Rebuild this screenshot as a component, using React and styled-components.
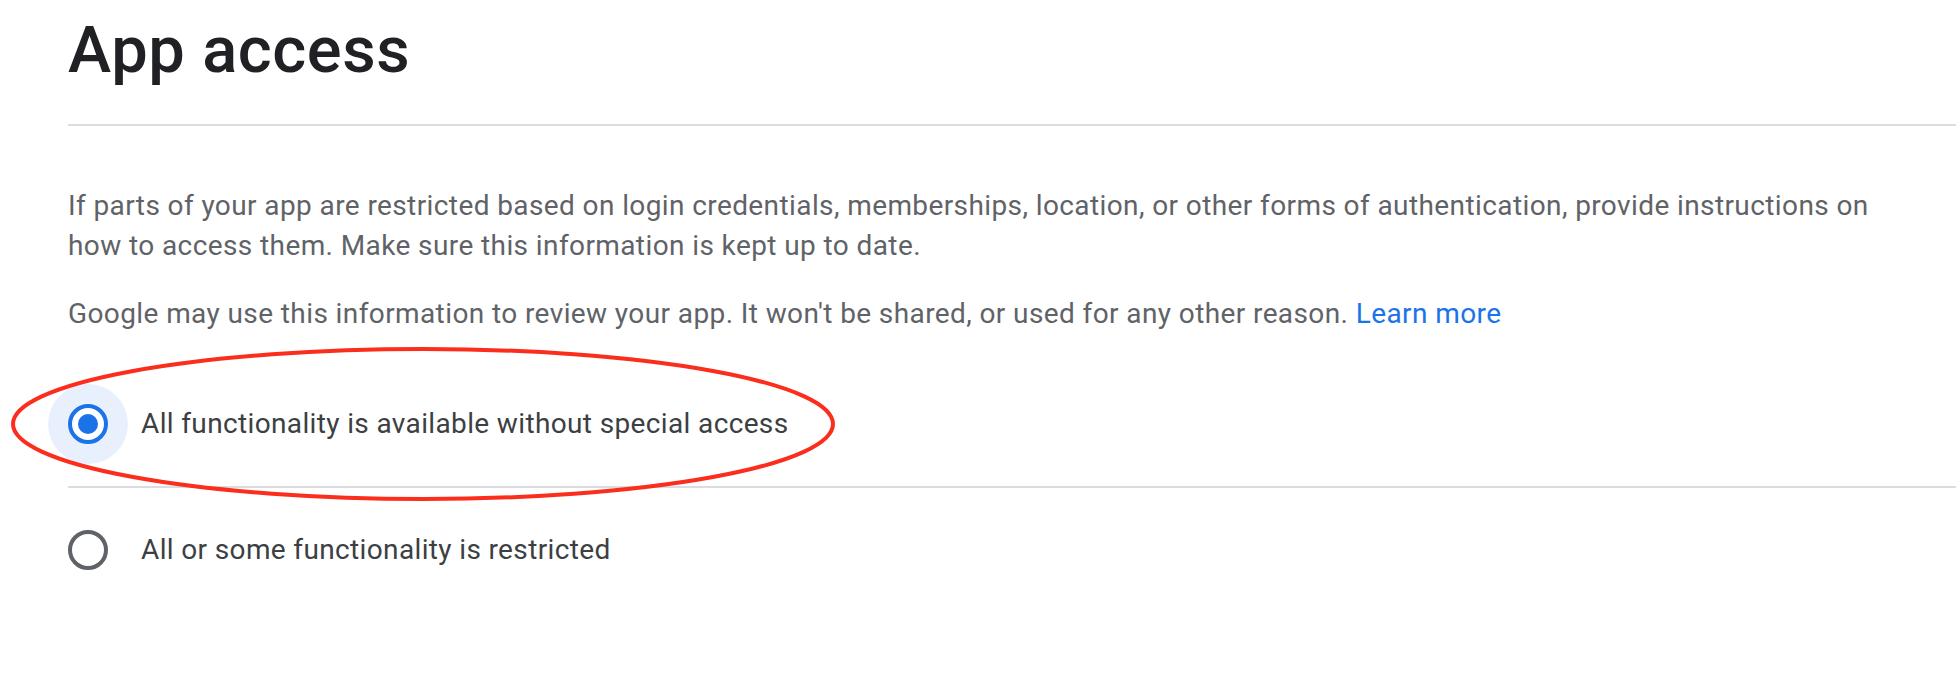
import React, { useState } from "react";
import styled, { createGlobalStyle } from "styled-components";

const GlobalStyle = createGlobalStyle`
  html, body {
    margin: 0;
    padding: 0;
    background: #ffffff;
  }
  body {
    font-family: Roboto, "Liberation Sans", Arial, sans-serif;
    -webkit-font-smoothing: antialiased;
  }
`;

const Page = styled.main`
  padding: 11px 0 0 68px;
`;

const Title = styled.h1`
  margin: 0;
  font-size: 65px;
  line-height: 79px;
  font-weight: 500;
  color: #202124;
  letter-spacing: 0.6px;
`;

const Divider = styled.hr`
  margin: ${({ $top }) => $top || 0}px 0 0;
  border: 0;
  height: 2px;
  background: #dadce0;
`;

const Section = styled.section`
  padding-top: 60px;
`;

const Paragraph = styled.p`
  margin: 0 0 28px;
  max-width: 1850px;
  font-size: 28px;
  line-height: 40px;
  color: #5f6368;
  letter-spacing: 0.4px;
`;

const Link = styled.a`
  color: #1a73e8;
  text-decoration: none;
  cursor: pointer;
`;

const Options = styled.div`
  margin-top: 50px;
`;

const OptionRow = styled.label`
  position: relative;
  display: flex;
  align-items: center;
  height: 80px;
  margin: ${({ $first }) => ($first ? "0 0 22px" : "22px 0 0")};
  cursor: pointer;
`;

const Radio = styled.span`
  flex: none;
  width: 40px;
  height: 40px;
  box-sizing: border-box;
  border-radius: 50%;
  border: 4px solid ${({ $checked }) => ($checked ? "#1a73e8" : "#5f6368")};
  box-shadow: ${({ $checked }) => ($checked ? "0 0 0 20px #e8f0fe" : "none")};
  display: flex;
  align-items: center;
  justify-content: center;

  &::after {
    content: "";
    width: 20px;
    height: 20px;
    border-radius: 50%;
    background: #1a73e8;
    transform: scale(${({ $checked }) => ($checked ? 1 : 0)});
  }
`;

const HiddenInput = styled.input`
  position: absolute;
  opacity: 0;
  width: 0;
  height: 0;
`;

const OptionText = styled.span`
  margin-left: 33px;
  font-size: 28px;
  line-height: 40px;
  color: #3c4043;
  letter-spacing: 0.36px;
`;

const Highlight = styled.svg`
  position: absolute;
  left: -56px;
  top: -40px;
  width: 830px;
  height: 160px;
  pointer-events: none;
  overflow: visible;
`;

const OPTIONS = [
  { id: "all", label: "All functionality is available without special access" },
  { id: "restricted", label: "All or some functionality is restricted" },
];

export default function App() {
  const [value, setValue] = useState("all");

  return (
    <>
      <GlobalStyle />
      <Page>
        <Title>App access</Title>
        <Divider $top={34} />
        <Section>
          <Paragraph>
            If parts of your app are restricted based on login credentials, memberships, location, or
            other forms of authentication, provide instructions on how to access them. Make sure this
            information is kept up to date.
          </Paragraph>
          <Paragraph>
            Google may use this information to review your app. It won't be shared, or used for any
            other reason. <Link>Learn more</Link>
          </Paragraph>
          <Options>
            {OPTIONS.map((opt, i) => (
              <React.Fragment key={opt.id}>
                {i > 0 && <Divider />}
                <OptionRow $first={i === 0}>
                  <HiddenInput
                    type="radio"
                    name="access"
                    checked={value === opt.id}
                    onChange={() => setValue(opt.id)}
                  />
                  <Radio $checked={value === opt.id} />
                  <OptionText>{opt.label}</OptionText>
                  {i === 0 && (
                    <Highlight viewBox="0 0 830 160">
                      <ellipse
                        cx="411"
                        cy="80"
                        rx="410"
                        ry="75"
                        fill="none"
                        stroke="#fb2d1c"
                        strokeWidth="4"
                      />
                    </Highlight>
                  )}
                </OptionRow>
              </React.Fragment>
            ))}
          </Options>
        </Section>
      </Page>
    </>
  );
}
